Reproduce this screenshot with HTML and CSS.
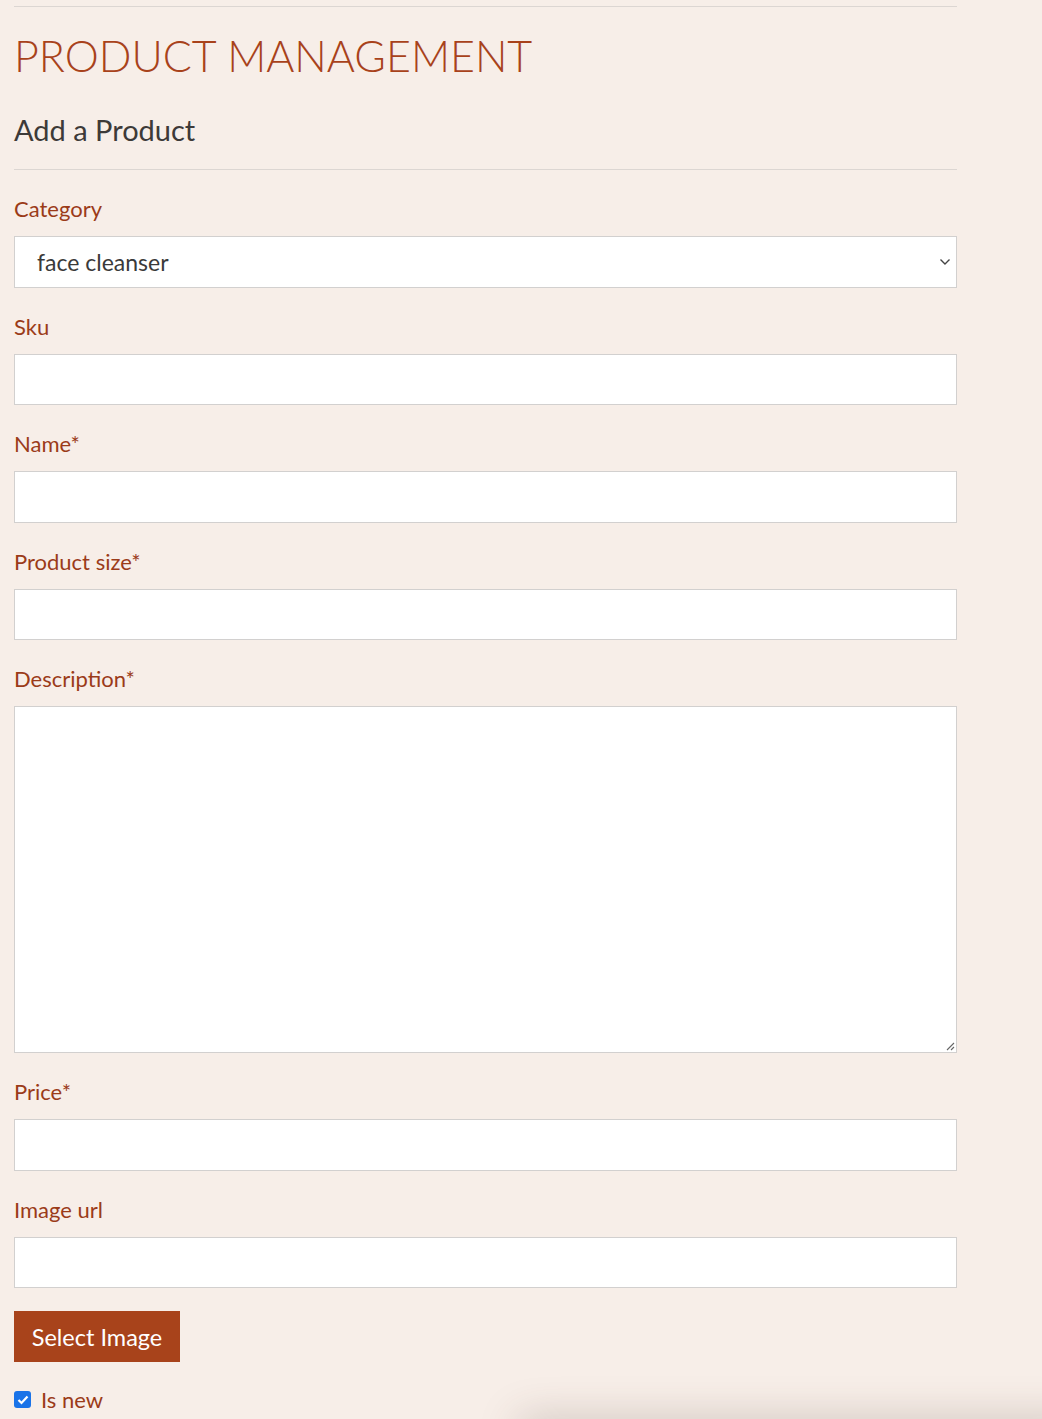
FILE: index.html
```html
<!DOCTYPE html>
<html>
<head>
<meta charset="utf-8">
<link rel="stylesheet" href="styles.css">
</head>
<body>
<div class="page">
  <hr class="rule rule-top">
  <h1 class="title">PRODUCT MANAGEMENT</h1>
  <h2 class="subtitle">Add a Product</h2>
  <hr class="rule rule-mid">
  <form class="form">
    <div class="field">
      <label class="label">Category</label>
      <div class="select-wrap">
        <div class="control select">face cleanser</div>
        <svg class="chev" width="12" height="8" viewBox="0 0 12 8"><path d="M1.5 1.5 L6 6 L10.5 1.5" fill="none" stroke="#444" stroke-width="1.4"/></svg>
      </div>
    </div>
    <div class="field">
      <label class="label">Sku</label>
      <div class="control"></div>
    </div>
    <div class="field">
      <label class="label">Name*</label>
      <div class="control"></div>
    </div>
    <div class="field">
      <label class="label">Product size*</label>
      <div class="control"></div>
    </div>
    <div class="field">
      <label class="label">Description*</label>
      <div class="control textarea">
        <svg class="grip" width="10" height="10" viewBox="0 0 10 10"><path d="M9 2 L2 9 M9 6 L6 9" stroke="#666" stroke-width="1.1"/></svg>
      </div>
    </div>
    <div class="field">
      <label class="label">Price*</label>
      <div class="control"></div>
    </div>
    <div class="field">
      <label class="label">Image url</label>
      <div class="control"></div>
    </div>
    <div class="btn">Select Image</div>
    <div class="check-row">
      <span class="checkbox"><svg width="12" height="10" viewBox="0 0 12 10"><path d="M1.5 5 L4.5 8 L10.5 1.5" fill="none" stroke="#fff" stroke-width="2.2"/></svg></span>
      <span class="check-label">Is new</span>
    </div>
  </form>
</div>
<div class="shade"></div>
</body>
</html>
```
FILE: styles.css
```css
html, body {
  margin: 0;
  padding: 0;
  background: #f7eee8;
  font-family: "Lato", "Open Sans", sans-serif;
}
.page {
  width: 943px;
  padding-left: 14px;
  padding-top: 6px;
}
.rule {
  border: 0;
  border-top: 1px solid #dcd6d2;
  margin: 0;
}
.title {
  margin: 21px 0 0 0;
  font-size: 43px;
  line-height: 56px;
  font-weight: 300;
  color: #a8421b;
  letter-spacing: 0;
}
.subtitle {
  margin: 28px 0 0 0;
  font-size: 29px;
  line-height: 36px;
  font-weight: 400;
  color: #3d3a38;
}
.rule-mid {
  margin-top: 21px;
}
.form {
  display: flex;
  flex-direction: column;
  padding-top: 24px;
}
.field {
  display: flex;
  flex-direction: column;
  margin-bottom: 24px;
}
.label {
  font-size: 22px;
  line-height: 30px;
  color: #9b3b19;
  margin-bottom: 12px;
}
.control {
  height: 49.5px;
  background: #fff;
  border: 1px solid #d2d0cf;
  box-sizing: content-box;
  position: relative;
}
.select-wrap {
  position: relative;
}
.select {
  display: flex;
  align-items: center;
  padding-left: 22px;
  font-size: 23px;
  color: #3a3a3a;
}
.chev {
  position: absolute;
  right: 6px;
  top: 22px;
}
.textarea {
  height: 345px;
}
.grip {
  position: absolute;
  right: 1px;
  bottom: 1px;
}
.btn {
  align-self: flex-start;
  width: 166px;
  height: 51px;
  background: #a8431b;
  color: #fff;
  font-size: 23.5px;
  display: flex;
  align-items: center;
  justify-content: center;
  margin-top: -1px;
}
.check-row {
  display: flex;
  align-items: center;
  margin-top: 24px;
}
.checkbox {
  width: 17px;
  height: 17px;
  border-radius: 3px;
  background: #1a73e8;
  display: flex;
  align-items: center;
  justify-content: center;
}
.check-label {
  margin-left: 10px;
  font-size: 22px;
  color: #9b3b19;
}
.shade {
  position: fixed;
  left: 520px;
  right: -40px;
  bottom: -30px;
  height: 30px;
  box-shadow: 0 0 40px rgba(80, 60, 50, 0.25);
  background: #e6ded8;
}
```
